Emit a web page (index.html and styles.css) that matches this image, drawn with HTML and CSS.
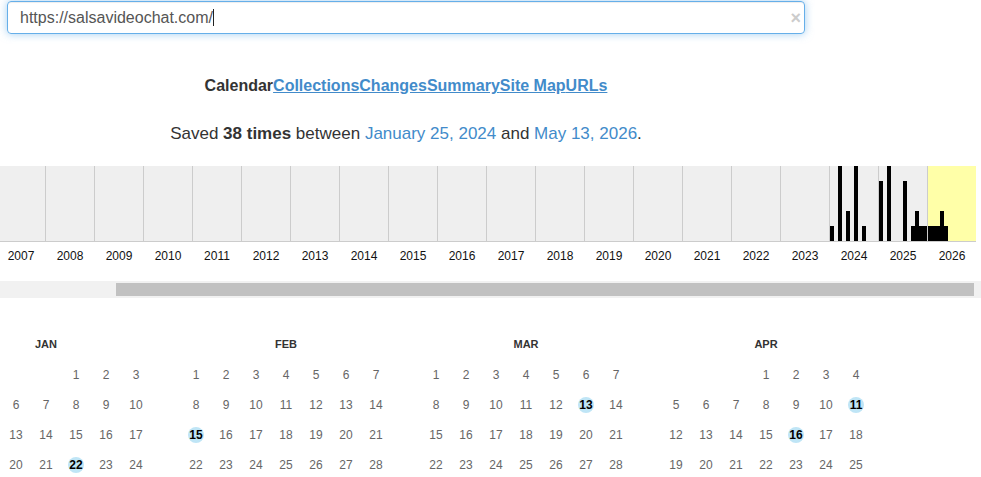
FILE: index.html
```html
<!DOCTYPE html>
<html>
<head>
<meta charset="utf-8">
<link rel="stylesheet" href="styles.css">
</head>
<body>

<div class="top">
    <div class="url-box">
        <span class="url-text">https://salsavideochat.com/</span><span class="caret"></span>
        <span class="clear">&times;</span>
    </div>

    <nav class="tabs">
        <span class="tab current">Calendar</span><a class="tab" href="#">Collections</a><a class="tab" href="#">Changes</a><a class="tab" href="#">Summary</a><a class="tab" href="#">Site Map</a><a class="tab" href="#">URLs</a>
    </nav>

    <p class="saved">Saved <b>38 times</b> between <a href="#">January 25, 2024</a> and <a href="#">May 13, 2026</a>.</p>
</div>

<!-- captures per year, one 4px slot per month -->
<div class="sparkline">
    <div class="year"></div>
    <div class="year"></div>
    <div class="year"></div>
    <div class="year"></div>
    <div class="year"></div>
    <div class="year"></div>
    <div class="year"></div>
    <div class="year"></div>
    <div class="year"></div>
    <div class="year"></div>
    <div class="year"></div>
    <div class="year"></div>
    <div class="year"></div>
    <div class="year"></div>
    <div class="year"></div>
    <div class="year"></div>
    <div class="year"></div>
    <div class="year">
        <span class="month"><i class="bar" style="height:15px"></i></span>
        <span class="month"></span>
        <span class="month"><i class="bar" style="height:75px"></i></span>
        <span class="month"></span>
        <span class="month"><i class="bar" style="height:30px"></i></span>
        <span class="month"></span>
        <span class="month"><i class="bar" style="height:75px"></i></span>
        <span class="month"></span>
        <span class="month"><i class="bar" style="height:15px"></i></span>
        <span class="month"></span>
        <span class="month"></span>
        <span class="month"></span>
    </div>
    <div class="year">
        <span class="month"><i class="bar" style="height:60px"></i></span>
        <span class="month"></span>
        <span class="month"><i class="bar" style="height:75px"></i></span>
        <span class="month"></span>
        <span class="month"></span>
        <span class="month"></span>
        <span class="month"><i class="bar" style="height:60px"></i></span>
        <span class="month"></span>
        <span class="month"><i class="bar" style="height:15px"></i></span>
        <span class="month"><i class="bar" style="height:30px"></i></span>
        <span class="month"><i class="bar" style="height:15px"></i></span>
        <span class="month"><i class="bar" style="height:15px"></i></span>
    </div>
    <div class="year active">
        <span class="month"><i class="bar" style="height:15px"></i></span>
        <span class="month"><i class="bar" style="height:15px"></i></span>
        <span class="month"><i class="bar" style="height:15px"></i></span>
        <span class="month"><i class="bar" style="height:30px"></i></span>
        <span class="month"><i class="bar" style="height:15px"></i></span>
        <span class="month"></span>
        <span class="month"></span>
        <span class="month"></span>
        <span class="month"></span>
        <span class="month"></span>
        <span class="month"></span>
        <span class="month"></span>
    </div>
</div>

<div class="year-labels">
    <span>2007</span><span>2008</span><span>2009</span><span>2010</span><span>2011</span>
    <span>2012</span><span>2013</span><span>2014</span><span>2015</span><span>2016</span>
    <span>2017</span><span>2018</span><span>2019</span><span>2020</span><span>2021</span>
    <span>2022</span><span>2023</span><span>2024</span><span>2025</span><span>2026</span>
</div>

<div class="scroller"><div class="thumb"></div></div>

<div class="calendar">
    <div class="cal-month">
        <div class="cal-title">JAN</div>
        <div class="days">
            <span></span><span></span><span></span><span></span>
            <span>1</span><span>2</span><span>3</span>
            <span>4</span><span>5</span><span>6</span><span>7</span><span>8</span><span>9</span><span>10</span>
            <span>11</span><span>12</span><span>13</span><span>14</span><span>15</span><span>16</span><span>17</span>
            <span>18</span><span>19</span><span>20</span><span>21</span><span class="hit"><b>22</b></span><span>23</span><span>24</span>
            <span>25</span><span>26</span><span>27</span><span>28</span><span>29</span><span>30</span><span>31</span>
        </div>
    </div>
    <div class="cal-month">
        <div class="cal-title">FEB</div>
        <div class="days">
            <span>1</span><span>2</span><span>3</span><span>4</span><span>5</span><span>6</span><span>7</span>
            <span>8</span><span>9</span><span>10</span><span>11</span><span>12</span><span>13</span><span>14</span>
            <span class="hit"><b>15</b></span><span>16</span><span>17</span><span>18</span><span>19</span><span>20</span><span>21</span>
            <span>22</span><span>23</span><span>24</span><span>25</span><span>26</span><span>27</span><span>28</span>
        </div>
    </div>
    <div class="cal-month">
        <div class="cal-title">MAR</div>
        <div class="days">
            <span>1</span><span>2</span><span>3</span><span>4</span><span>5</span><span>6</span><span>7</span>
            <span>8</span><span>9</span><span>10</span><span>11</span><span>12</span><span class="hit"><b>13</b></span><span>14</span>
            <span>15</span><span>16</span><span>17</span><span>18</span><span>19</span><span>20</span><span>21</span>
            <span>22</span><span>23</span><span>24</span><span>25</span><span>26</span><span>27</span><span>28</span>
            <span>29</span><span>30</span><span>31</span>
        </div>
    </div>
    <div class="cal-month">
        <div class="cal-title">APR</div>
        <div class="days">
            <span></span><span></span><span></span>
            <span>1</span><span>2</span><span>3</span><span>4</span>
            <span>5</span><span>6</span><span>7</span><span>8</span><span>9</span><span>10</span><span class="hit"><b>11</b></span>
            <span>12</span><span>13</span><span>14</span><span>15</span><span class="hit"><b>16</b></span><span>17</span><span>18</span>
            <span>19</span><span>20</span><span>21</span><span>22</span><span>23</span><span>24</span><span>25</span>
            <span>26</span><span>27</span><span>28</span><span>29</span><span>30</span>
        </div>
    </div>
</div>

</body>
</html>
```

FILE: styles.css
```css
html, body {
    margin: 0;
    overflow: hidden;
}

body {
    font-family: "Liberation Sans", Arial, sans-serif;
    color: #333;
    background: #fff;
    width: 981px;
    height: 477px;
}

a {
    color: #428bca;
}

/* header: url box, tabs, summary line */
.top {
    width: 812px;
    text-align: center;
}

.url-box {
    box-sizing: border-box;
    margin: 1px 7px 0 7px;
    height: 33px;
    padding: 0 3px 0 12px;
    display: flex;
    align-items: center;
    text-align: left;
    border: 1px solid #66afe9;
    border-radius: 4px;
    box-shadow: inset 0 1px 1px rgba(0, 0, 0, .075), 0 0 8px rgba(102, 175, 233, .6);
}

.url-text {
    font-size: 16px;
    color: #555;
}

.caret {
    display: inline-block;
    height: 17px;
    border-left: 1px solid #222;
}

.clear {
    margin-left: auto;
    font-size: 18px;
    font-weight: bold;
    color: #ccc;
    line-height: 1;
}

.tabs {
    margin-top: 42px;
    font-size: 16px;
    font-weight: bold;
    line-height: 20px;
}

.tab.current {
    color: #333;
}

.saved {
    margin: 28px 0 0 0;
    font-size: 17px;
    line-height: 20px;
}

.saved a {
    text-decoration: none;
}

/* yearly histogram */
.sparkline {
    display: flex;
    margin: 22px 0 0 -4px;
}

.year {
    width: 48px;
    height: 75px;
    display: flex;
    align-items: flex-end;
    background: #efefef;
    border-left: 1px solid #ccc;
    border-bottom: 1px solid #ccc;
}

.year.active {
    background: #ffffa8;
}

.month {
    width: 4px;
    height: 100%;
    display: flex;
    align-items: flex-end;
}

.bar {
    display: block;
    width: 4px;
    background: #000;
}

.year-labels {
    display: flex;
    margin: 7px 0 0 -4px;
    font-size: 12px;
    line-height: 14px;
    color: #111;
}

.year-labels span {
    width: 48px;
    padding-left: 1px;
    text-align: center;
}

.scroller {
    margin-top: 18px;
    height: 17px;
    background: #f1f1f1;
    display: flex;
    align-items: center;
}

.thumb {
    margin-left: 116px;
    width: 858px;
    height: 13px;
    background: #c1c1c1;
}

/* month grids */
.calendar {
    display: flex;
    gap: 30px;
    margin: 39px 0 0 -59px;
}

.cal-month {
    width: 210px;
    flex: none;
}

.cal-title {
    text-align: center;
    font-size: 11px;
    font-weight: bold;
    line-height: 14px;
    color: #333;
}

.days {
    margin-top: 9px;
    display: grid;
    grid-template-columns: repeat(7, 30px);
    grid-auto-rows: 30px;
    font-size: 12px;
    color: #666;
}

.days span {
    display: flex;
    align-items: center;
    justify-content: center;
}

.days .hit b {
    display: flex;
    align-items: center;
    justify-content: center;
    width: 16px;
    height: 16px;
    border-radius: 50%;
    background: #bfe5f6;
    color: #000;
}
```
